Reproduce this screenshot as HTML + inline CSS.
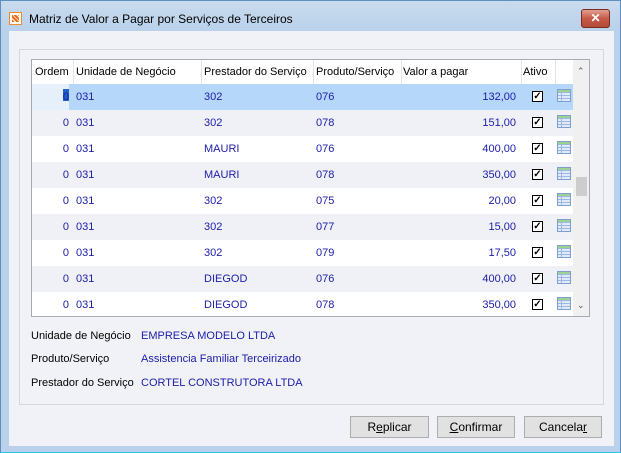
<!DOCTYPE html>
<html><head><meta charset="utf-8"><style>
*{margin:0;padding:0;box-sizing:border-box}
body{width:621px;height:453px;background:#b9d1ea;font-family:"Liberation Sans",sans-serif;font-size:11px;color:#000;position:relative;overflow:hidden}
.win{position:absolute;left:0;top:0;width:621px;height:453px;border:1px solid #5e8fbf;border-bottom:1px solid #29c3e6;background:linear-gradient(#c9dbee,#b9d1ea 30px)}
.title{position:absolute;left:28px;top:11px;font-size:12px;color:#000}
.ico{position:absolute;left:8px;top:11px;width:13px;height:13px;background:#fff;border:1px solid #f08a2a}
.ico:after{content:"";position:absolute;left:2px;top:2px;width:7px;height:7px;background:repeating-linear-gradient(45deg,#f06a10 0 2px,#fff 2px 3px)}
.close{position:absolute;left:580px;top:8px;width:29px;height:19px;border:1px solid #7a2a20;border-radius:3px;background:linear-gradient(#e0a090,#c75a48 50%,#b44a38);color:#fff;font-weight:bold;font-size:12px;text-align:center;line-height:17px}
.client{position:absolute;left:8px;top:30px;width:605px;height:415px;background:#f1f2f7}
.panel{position:absolute;left:10px;top:18px;width:585px;height:356px;border:1px solid #d4d6dc}
.grid{position:absolute;left:22px;top:28px;width:559px;height:258px;border:1px solid #a8aab0;background:#fff;overflow:hidden}
.hdr{position:absolute;left:0;top:0;height:24px;width:541px;background:#fff}
.c{position:absolute;top:0;height:100%;line-height:24px;white-space:nowrap}
.sep{position:absolute;top:0;width:1px;height:24px;background:#e3e4e8}
.row{position:absolute;left:0;width:541px;height:26px;color:#1c1ca8}
.row .c{line-height:26px}
.cb{position:absolute;left:500px;top:7px;width:11px;height:11px;border:1px solid #000;background:#fff;font-size:10px;line-height:9px;text-align:center;color:#000;font-weight:bold}
.tb{position:absolute;left:525px;top:5px;width:14px;height:13px;border:1px solid #7c9fd0;background:repeating-linear-gradient(#dfe9f7 0 2px,#9db8e0 2px 3px);}
.tb:before{content:"";position:absolute;left:3px;top:0;width:1px;height:11px;background:#9db8e0}
.tb:after{content:"";position:absolute;left:0;top:0;width:12px;height:2px;background:#9ed28e}
.sb{position:absolute;left:541px;top:0;width:17px;height:258px;background:#f0f0f0}
.lbl{position:absolute;left:22px}
.val{position:absolute;left:132px;color:#1c1ca8}
.btn{position:absolute;top:385px;height:22px;border:1px solid #adadad;background:#e1e1e1;text-align:center;line-height:20px;font-size:12px}
</style></head><body>
<div class="win">
<div class="ico"></div>
<div class="title">Matriz de Valor a Pagar por Serviços de Terceiros</div>
<div class="close">✕</div>
<div class="client">
<div class="panel"></div>
<div class="grid">
<div class="hdr">
<div class="c" style="left:3px">Ordem</div>
<div class="c" style="left:44px">Unidade de Negócio</div>
<div class="c" style="left:172px">Prestador do Serviço</div>
<div class="c" style="left:284px">Produto/Serviço</div>
<div class="c" style="left:371px">Valor a pagar</div>
<div class="c" style="left:491px">Ativo</div>
<div class="sep" style="left:41px"></div><div class="sep" style="left:169px"></div><div class="sep" style="left:281px"></div><div class="sep" style="left:369px"></div><div class="sep" style="left:489px"></div><div class="sep" style="left:523px"></div>
</div>
<div id="rows"></div>
<div class="sb"><div style="position:absolute;left:4px;top:6px;font-size:9px;color:#555">&#8963;</div><div style="position:absolute;left:3px;top:117px;width:11px;height:19px;background:#cdcdcd"></div><div style="position:absolute;left:4px;top:240px;font-size:9px;color:#555">&#8964;</div></div>
</div>
<div class="lbl" style="top:299px">Unidade de Negócio</div><div class="val" style="top:299px">EMPRESA MODELO LTDA</div>
<div class="lbl" style="top:322px">Produto/Serviço</div><div class="val" style="top:322px">Assistencia Familiar Terceirizado</div>
<div class="lbl" style="top:346px">Prestador do Serviço</div><div class="val" style="top:346px">CORTEL CONSTRUTORA LTDA</div>
<div class="btn" style="left:341px;width:79px">R<u>e</u>plicar</div>
<div class="btn" style="left:428px;width:78px"><u>C</u>onfirmar</div>
<div class="btn" style="left:515px;width:78px">Cancela<u>r</u></div>
</div></div>
<script>
var d=[["302","076","132,00"],["302","078","151,00"],["MAURI","076","400,00"],["MAURI","078","350,00"],["302","075","20,00"],["302","077","15,00"],["302","079","17,50"],["DIEGOD","076","400,00"],["DIEGOD","078","350,00"]];
var h="";d.forEach(function(r,i){var bg=i==0?"#b5d7fa":(i%2?"#f0f1f6":"#fff");
h+='<div class="row" style="top:'+(24+i*26)+'px;background:'+bg+'">'+(i==0?'<div style="position:absolute;left:0;top:0;width:37px;height:26px;background:#e6f0fb"></div><div style="position:absolute;left:31px;top:5px;width:6px;height:12px;background:#1e62c8"></div>':'')+'<div class="c" style="left:0;width:37px;text-align:right">0</div><div class="c" style="left:44px">031</div><div class="c" style="left:172px">'+r[0]+'</div><div class="c" style="left:284px">'+r[1]+'</div><div class="c" style="left:369px;width:115px;text-align:right">'+r[2]+'</div><div class="cb">✓</div><div class="tb"></div></div>';});
document.getElementById("rows").innerHTML=h;
</script>
</body></html>
